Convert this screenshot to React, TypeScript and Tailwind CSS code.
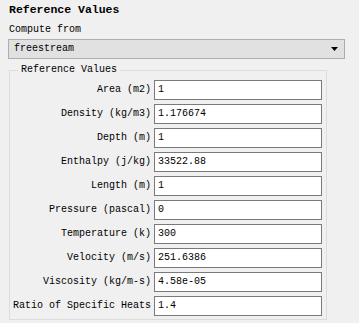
const rows: [string, string][] = [
  ["Area (m2)", "1"],
  ["Density (kg/m3)", "1.176674"],
  ["Depth (m)", "1"],
  ["Enthalpy (j/kg)", "33522.88"],
  ["Length (m)", "1"],
  ["Pressure (pascal)", "0"],
  ["Temperature (k)", "300"],
  ["Velocity (m/s)", "251.6386"],
  ["Viscosity (kg/m-s)", "4.58e-05"],
  ["Ratio of Specific Heats", "1.4"],
];

export default function App() {
  return (
    <div className="w-[359px] h-[323px] overflow-hidden bg-[#f0f0f0] text-black text-[10px] leading-[12px] font-['Liberation_Mono',monospace]">
      <div className="pl-[9px] pt-[4px] font-bold text-[11.5px] leading-[12px]">Reference Values</div>
      <div className="pl-[9px] pt-[8px]">Compute from</div>
      <div className="ml-[8px] mt-[3px] w-[337px] h-[20px] flex items-center justify-between bg-[#e1e1e1] border border-[#adadad] pl-[5px] pr-[6px]">
        <span>freestream</span>
        <svg width="7" height="4" viewBox="0 0 7 4">
          <path d="M0 0h7L3.5 4z" fill="#000" />
        </svg>
      </div>
      <div className="relative ml-[9px] mt-[11px] w-[318px] h-[250px] border border-[#dcdcdc]">
        <span className="absolute left-[8px] -top-[7px] px-[3px] bg-[#f0f0f0]">Reference Values</span>
        <div className="flex flex-col gap-[4px] pt-[9px] pr-[4px]">
          {rows.map(([label, value]) => (
            <div key={label} className="flex items-center justify-end">
              <span className="pr-[3px] text-right">{label}</span>
              <div className="w-[168px] h-[20px] bg-white border border-[#7a7a7a] flex items-center pl-[3px]">
                {value}
              </div>
            </div>
          ))}
        </div>
      </div>
    </div>
  );
}
